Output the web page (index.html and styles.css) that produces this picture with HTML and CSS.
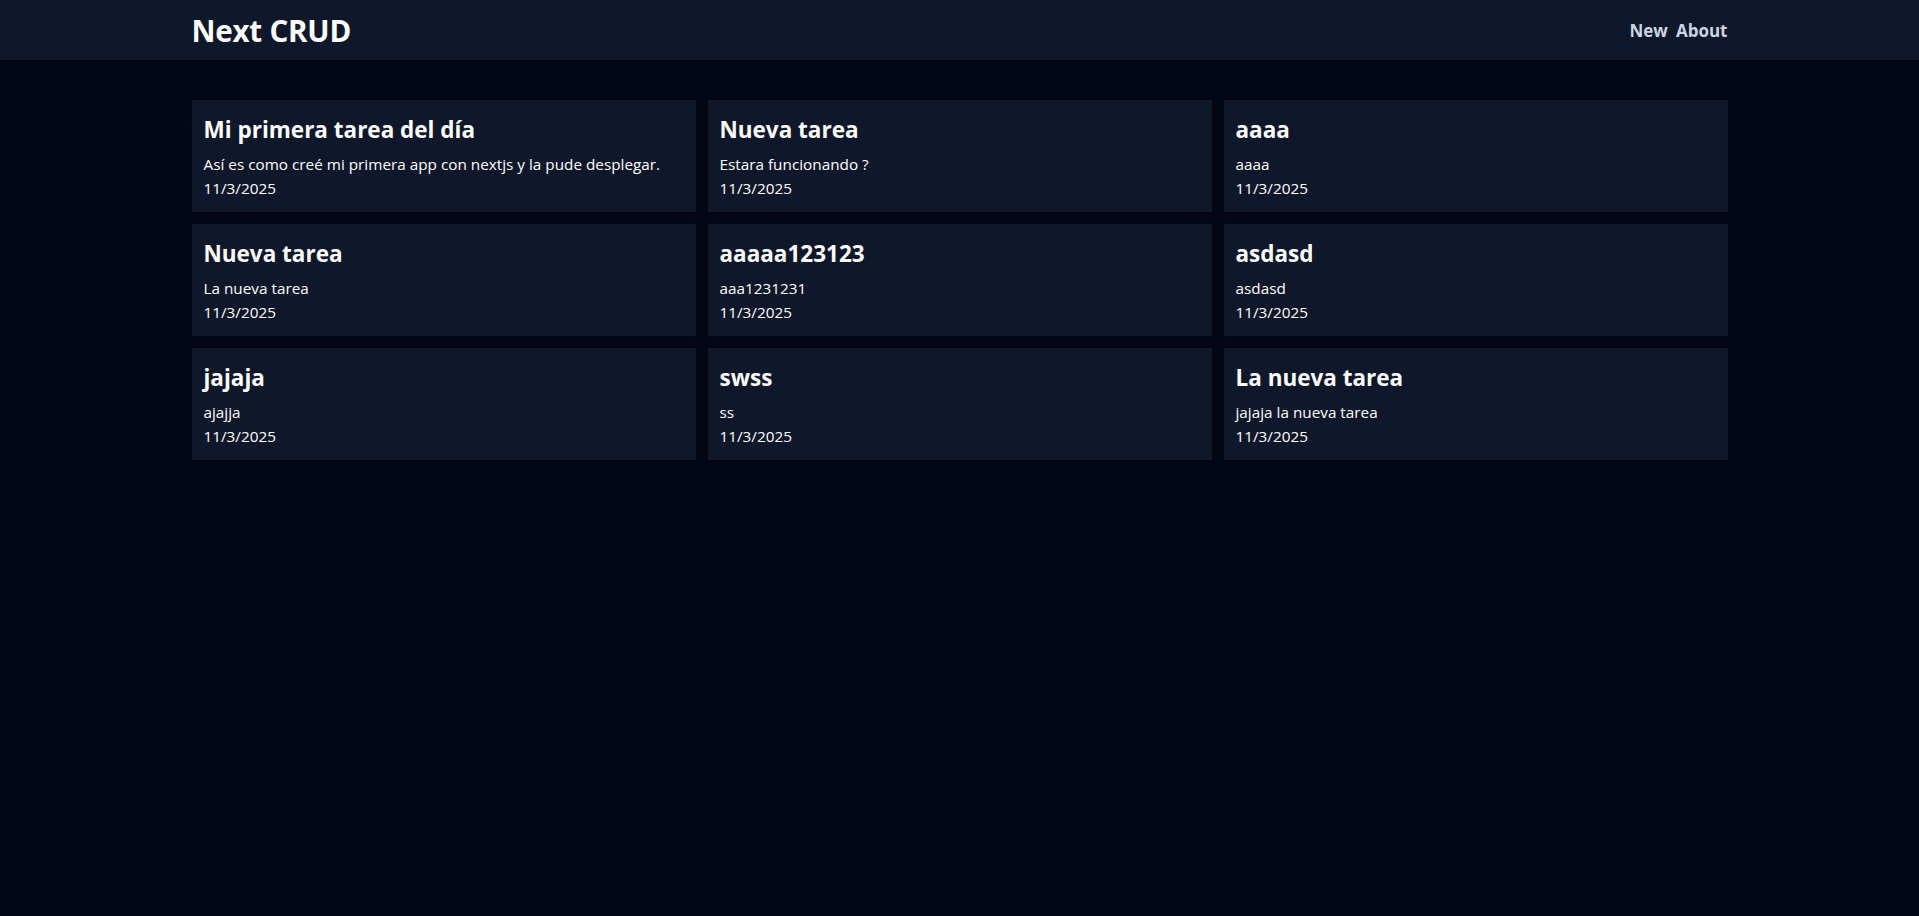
FILE: index.html
```html
<!DOCTYPE html>
<html lang="es">
<head>
<meta charset="utf-8">
<title>Next CRUD</title>
<link rel="stylesheet" href="styles.css">
</head>
<body>
<nav class="navbar">
  <div class="nav-inner">
    <h1 class="brand">Next CRUD</h1>
    <div class="links">
      <a class="link" href="#">New</a>
      <a class="link" href="#">About</a>
    </div>
  </div>
</nav>
<main class="container">
  <div class="grid">
    <div class="card"><h3 class="title">Mi primera tarea del día</h3><p class="text">Así es como creé mi primera app con nextjs y la pude desplegar.</p><p class="text">11/3/2025</p></div>
    <div class="card"><h3 class="title">Nueva tarea</h3><p class="text">Estara funcionando ?</p><p class="text">11/3/2025</p></div>
    <div class="card"><h3 class="title">aaaa</h3><p class="text">aaaa</p><p class="text">11/3/2025</p></div>
    <div class="card"><h3 class="title">Nueva tarea</h3><p class="text">La nueva tarea</p><p class="text">11/3/2025</p></div>
    <div class="card"><h3 class="title">aaaaa123123</h3><p class="text">aaa1231231</p><p class="text">11/3/2025</p></div>
    <div class="card"><h3 class="title">asdasd</h3><p class="text">asdasd</p><p class="text">11/3/2025</p></div>
    <div class="card"><h3 class="title">jajaja</h3><p class="text">ajajja</p><p class="text">11/3/2025</p></div>
    <div class="card"><h3 class="title">swss</h3><p class="text">ss</p><p class="text">11/3/2025</p></div>
    <div class="card"><h3 class="title">La nueva tarea</h3><p class="text">jajaja la nueva tarea</p><p class="text">11/3/2025</p></div>
  </div>
</main>
</body>
</html>
```
FILE: styles.css
```css
* { box-sizing: border-box; margin: 0; padding: 0; }
html, body { height: 100%; }
body {
  background: #020617;
  color: #ffffff;
  font-family: "Open Sans", "Noto Sans", sans-serif;
}
.navbar { background: #0f172a; }
.nav-inner {
  max-width: 1536px;
  margin: 0 auto;
  padding: 13px 0 11px;
  display: flex;
  align-items: center;
  justify-content: space-between;
}
.brand { font-size: 29.5px; line-height: 36px; font-weight: 700; letter-spacing: -0.2px; }
.links { display: flex; gap: 8px; }
.link { color: #cbd5e1; text-decoration: none; font-weight: 700; font-size: 17px; line-height: 28px; }
.container { max-width: 1536px; margin: 0 auto; padding-top: 40px; }
.grid { display: grid; grid-template-columns: repeat(3, 1fr); gap: 12px; }
.card { background: #0f172a; padding: 12px; }
.title { font-size: 22.5px; line-height: 32px; font-weight: 700; padding-top: 2px; margin-bottom: 6px; }
.text { font-size: 15.3px; line-height: 24px; color: #ffffff; }
```
